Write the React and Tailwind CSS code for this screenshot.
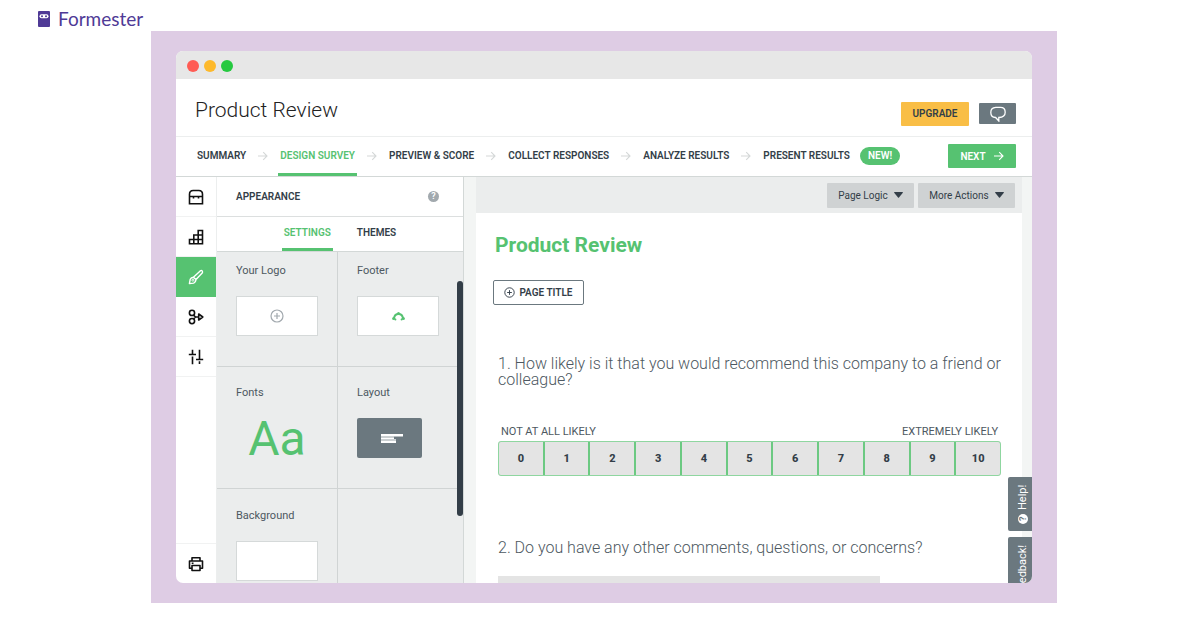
import React from "react";

function Icon({ size = "size-4", box = "0 0 16 16", children, className = "" }) {
  return (
    <svg viewBox={box} className={`${size} ${className}`} fill="none" stroke="currentColor" strokeWidth="1.5" aria-hidden="true">
      {children}
    </svg>
  );
}

const Arrow = ({ className = "" }) => (
  <Icon size="size-[10px]" box="0 0 10 10" className={`shrink-0 ${className}`}>
    <path d="M0 5h9M5.2 1.2 9 5 5.2 8.8" strokeWidth="1.1" />
  </Icon>
);

const PlusCircle = ({ size }) => (
  <Icon size={size} box="0 0 14 14">
    <circle cx="7" cy="7" r="6" strokeWidth="1.2" />
    <path d="M7 4v6M4 7h6" strokeWidth="1.2" />
  </Icon>
);

const Caret = () => (
  <svg viewBox="0 0 9 6" className="h-[6px] w-[9px]" aria-hidden="true">
    <path d="M.6 0h7.8q.8 0 .4.7L5 5.5q-.5.5-1 0L.2.7Q-.2 0 .6 0Z" fill="#333e48" />
  </svg>
);

const ChestIcon = () => (
  <Icon>
    <path d="M1.5 14.7V5.200q0-3.700 3.700-3.700h5.600q3.700 0 3.700 3.700v9.500zM1.500 7.500h13M5.500 7.500v2M10.500 7.500v2" strokeWidth="1.600" />
  </Icon>
);
const BlocksIcon = () => (
  <Icon>
    <path d="M1.500 10.500h13v4.200h-13zM5.800 14.500V6h8.700M10.200 14.500v-13h4.300v13" strokeWidth="1.600" />
  </Icon>
);
const BrushIcon = () => (
  <Icon>
    <path d="M5.400 8.300 12.200 1.900q1.200-.9 2 0t0 2.200L8 10.600M5.400 8.300q-2.300.2-3.200 2l-.8 4.300 4.300-.5q2.100-1 2.300-3.500z" strokeWidth="1.400" strokeLinejoin="round" />
    <circle cx="4.900" cy="11.200" r="1" strokeWidth=".9" />
  </Icon>
);
const LogicIcon = () => (
  <Icon>
    <circle cx="4" cy="3.900" r="2.600" strokeWidth="1.600" />
    <circle cx="4" cy="12.100" r="2.600" strokeWidth="1.600" />
    <path d="M5.600 6.200 7.500 8h3.500M5.600 9.800 7.500 8M10.700 5 14.800 8l-4.100 3z" strokeWidth="1.600" strokeLinejoin="round" />
  </Icon>
);
const SlidersIcon = () => (
  <Icon>
    <path d="M4.500 .8v4.700M4.500 7.500v7.700M.8 5.500h7.200M11.500 .8v9.700M11.500 12.200v2.800M8 10.500h7.200" strokeWidth="1.600" />
  </Icon>
);
const PrinterIcon = () => (
  <Icon>
    <path d="M4 5V1.700h8V5M4 12.300H1.500V5h13v7.300H12M4 9.500h8v5H4zM3.700 7.300h1.800" strokeWidth="1.600" strokeLinejoin="round" />
  </Icon>
);

const steps = ["SUMMARY", "DESIGN SURVEY", "PREVIEW & SCORE", "COLLECT RESPONSES", "ANALYZE RESULTS", "PRESENT RESULTS"];

const tools = [
  { name: "Question bank", icon: ChestIcon },
  { name: "Builder", icon: BlocksIcon },
  { name: "Appearance", icon: BrushIcon, active: true },
  { name: "Logic", icon: LogicIcon },
  { name: "Options", icon: SlidersIcon },
];

function Brand() {
  return (
    <header className="flex h-[31px] shrink-0 items-center pt-[6px] pl-[38px]">
      <a href="#" className="flex items-center gap-2 text-[#4f3a96]">
        <svg viewBox="0 0 12 16" className="h-4 w-3" aria-hidden="true">
          <rect width="12" height="16" rx="1" fill="#4f3a96" />
          <rect x="1.500" y="3.300" width="9" height="4" rx="2" fill="#fff" />
          <circle cx="4" cy="5.300" r="1" fill="#4f3a96" />
          <circle cx="8" cy="5.300" r="1" fill="#4f3a96" />
        </svg>
        <span className="font-['Lato',sans-serif] text-[19px] leading-5">Formester</span>
      </a>
    </header>
  );
}

function Steps() {
  return (
    <nav className="flex h-10 shrink-0 items-stretch justify-between border-b border-[#d3d8d7] pr-4 pl-[21px]">
      <div className="flex w-[653px] items-stretch justify-between">
        {steps.map((step, i) => (
          <React.Fragment key={step}>
            {i > 0 && <Arrow className="mt-[14px] text-[#d5d8d8]" />}
            <a
              href="#"
              className={
                i === 1
                  ? "-mx-[2px] border-b-3 border-[#56c271] px-[2px] pt-3 leading-[14px] whitespace-nowrap text-[#56c271]"
                  : "pt-3 leading-[14px] whitespace-nowrap"
              }
            >
              {step}
            </a>
          </React.Fragment>
        ))}
      </div>
      <span className="mt-[10px] mr-auto ml-[10px] h-[18px] rounded-full bg-[#56c271] px-2 leading-[18px] text-white">NEW!</span>
      <button className="mt-[7px] flex h-6 w-[68px] items-center justify-center gap-2 rounded-[1px] bg-[#56c271] text-white">
        NEXT <Arrow />
      </button>
    </nav>
  );
}

function Toolbar() {
  return (
    <aside className="flex w-[41px] shrink-0 flex-col border-r border-[#eceeee] text-[#111]">
      {tools.map(({ name, icon: Glyph, active }) => (
        <button
          key={name}
          aria-label={name}
          className={
            active
              ? "flex h-10 items-center justify-center bg-[#56c271] text-white"
              : "flex h-10 items-center justify-center border-b border-[#f1f2f2]"
          }
        >
          <Glyph />
        </button>
      ))}
      <button aria-label="Print" className="mt-auto flex h-10 items-center justify-center border-t border-[#f1f2f2]">
        <PrinterIcon />
      </button>
    </aside>
  );
}

function Appearance() {
  const label = "text-[11px] leading-4 text-[#4d5861]";
  return (
    <section className="flex w-[247px] shrink-0 flex-col border-r border-[#d3d8d7]">
      <div className="flex h-10 shrink-0 items-center justify-between border-b border-[#dcdfdf] pr-6 pl-[19px]">
        <h2 className="font-semibold">APPEARANCE</h2>
        <button aria-label="Help" className="size-[11px] rounded-full bg-[#a2a9ae] text-center text-[9px] leading-[11px] text-white">
          ?
        </button>
      </div>
      <div className="flex h-[35px] shrink-0 justify-center gap-[22px] border-b border-[#d3d8d7]">
        <button className="border-b-3 border-[#56c271] px-[2px] text-[#56c271]">SETTINGS</button>
        <button className="border-b-3 border-transparent px-[2px]">THEMES</button>
      </div>
      <div className="relative min-h-0 flex-1 overflow-hidden bg-[#ebeded]">
        <div className="grid grid-cols-[121px_1fr] font-normal">
          <div className="h-[115px] border-r border-b border-[#d0d4d4] pt-[11px] pl-[19px]">
            <div className={label}>Your Logo</div>
            <button aria-label="Add logo" className="mt-[17px] flex h-10 w-[82px] items-center justify-center border border-[#d5d9d9] bg-white text-[#a2a9ae]">
              <PlusCircle size="size-[14px]" />
            </button>
          </div>
          <div className="h-[115px] border-b border-[#d0d4d4] pt-[11px] pl-[19px]">
            <div className={label}>Footer</div>
            <button aria-label="Footer" className="mt-[17px] flex h-10 w-[82px] items-center justify-center border border-[#d5d9d9] bg-white">
              <svg viewBox="0 0 13 9" className="h-[9px] w-[13px]" fill="#56c271" aria-hidden="true">
                <path d="M2 6.500Q2.500 2 6.500 2T11 6.500" fill="none" stroke="#56c271" strokeWidth="2" />
                <circle cx="1.700" cy="6.500" r="1.600" />
                <circle cx="11.300" cy="6.500" r="1.600" />
                <circle cx="6.500" cy="1.600" r="1.500" />
                <circle cx="3.400" cy="7.500" r="1" />
                <circle cx="9.600" cy="7.500" r="1" />
              </svg>
            </button>
          </div>
          <div className="h-[122px] border-r border-b border-[#d0d4d4] pt-[18px] pl-[19px]">
            <div className={label}>Fonts</div>
            <button aria-label="Fonts" className="mt-[6px] flex h-16 w-[82px] items-center justify-center text-[48px] leading-none text-[#56c271]">
              Aa
            </button>
          </div>
          <div className="h-[122px] border-b border-[#d0d4d4] pt-[18px] pl-[19px]">
            <div className={label}>Layout</div>
            <button aria-label="Layout" className="mt-[17px] flex h-10 w-[65px] items-center justify-center rounded-[2px] bg-[#6b787f] pl-1">
              <svg viewBox="0 0 22 9" className="h-[9px] w-[22px]" aria-hidden="true">
                <path d="M0 0h22v2.500H13V5h2v4H0Z" fill="#fff" />
                <path d="M0 3h13M0 6h15" stroke="#6b787f" strokeWidth=".7" />
              </svg>
            </button>
          </div>
          <div className="h-[122px] border-r border-[#d0d4d4] pt-[19px] pl-[19px]">
            <div className={label}>Background</div>
            <button aria-label="Background" className="mt-[17px] block h-10 w-[82px] border border-[#d5d9d9] bg-white" />
          </div>
          <div />
        </div>
        <div className="absolute top-[29px] right-0 h-[235px] w-[6px] rounded-full bg-[#333e48]" />
      </div>
    </section>
  );
}

function Survey() {
  return (
    <main className="flex min-w-0 flex-1 flex-col bg-[#f3f5f4] pr-[10px] pl-3">
      <div className="flex h-9 shrink-0 items-center justify-end gap-1 bg-[#ebeded] pr-[7px] font-normal">
        <button className="flex h-[25px] w-[87px] items-center justify-center gap-[6px] rounded-[1px] bg-[#cfd2d3]">
          Page Logic <Caret />
        </button>
        <button className="flex h-[25px] w-[97px] items-center justify-center gap-[6px] rounded-[1px] bg-[#cfd2d3]">
          More Actions <Caret />
        </button>
      </div>
      <div className="min-h-0 flex-1 overflow-hidden bg-white pr-[21px] pl-[22px] font-normal">
        <h2 className="-ml-[3px] mt-5 text-[21px] leading-6 font-bold text-[#56c271]">Product Review</h2>
        <button className="-ml-[5px] mt-[23px] flex h-[25px] w-[91px] items-center justify-center gap-1 rounded-[2px] border border-[#6b787f] font-semibold">
          <PlusCircle size="size-[11px]" />
          PAGE TITLE
        </button>
        <p className="mt-[51px] text-[16px] leading-4 font-light text-[#4d5861]">
          1. How likely is it that you would recommend this company to a friend or colleague?
        </p>
        <div className="mt-[35px] flex justify-between px-[3px] text-[11px] leading-[18px] text-[#4d5861]">
          <span>NOT AT ALL LIKELY</span>
          <span>EXTREMELY LIKELY</span>
        </div>
        <fieldset className="flex h-[35px] divide-x-2 divide-[#6cc982] overflow-hidden rounded-[3px] border border-[#8fd6a0] bg-[#e4e4e4]">
          {[0, 1, 2, 3, 4, 5, 6, 7, 8, 9, 10].map((n) => (
            <label key={n} className="relative flex flex-1 items-center justify-center pt-[2px] text-[11px] font-extrabold">
              <input type="radio" name="likelihood" value={n} className="sr-only" />
              {n}
            </label>
          ))}
        </fieldset>
        <label htmlFor="comments" className="mt-16 block text-[16px] leading-4 font-light text-[#4d5861]">
          2. Do you have any other comments, questions, or concerns?
        </label>
        <textarea id="comments" className="mt-5 block h-20 w-[382px] resize-none bg-[#e4e4e4]" />
      </div>
    </main>
  );
}

function SideTabs() {
  const tab = "flex w-6 rotate-180 items-center rounded-r-[2px] bg-[#6b787f] pr-[6px] text-[11px] leading-[18px] font-normal text-white [writing-mode:vertical-rl]";
  return (
    <div className="absolute top-[300px] right-0 flex flex-col gap-[6px]">
      <button className={`${tab} h-[54px] justify-center gap-1`}>
        <span className="flex size-[10px] items-center justify-center rounded-full bg-white text-[9px] leading-none font-bold text-[#6b787f]">?</span>
        Help!
      </button>
      <button className={`${tab} h-[66px] justify-end pb-2`}>Feedback!</button>
    </div>
  );
}

export default function App() {
  return (
    <div className="flex h-screen flex-col bg-white pb-[27px]">
      <Brand />
      <div className="mr-[143px] ml-[151px] flex min-h-0 flex-1 flex-col bg-[#decce4] px-[25px] py-5 font-['Roboto',sans-serif] text-[10px] font-semibold text-[#333e48]">
        <div className="flex min-h-0 flex-1 flex-col overflow-hidden rounded-[7px] bg-white">
          <div className="flex h-7 shrink-0 items-center gap-[5px] bg-[#e7e7e7] pt-[2px] pl-[11px]">
            <span className="size-3 rounded-full bg-[#ff5c54]" />
            <span className="size-3 rounded-full bg-[#fdb92c]" />
            <span className="size-3 rounded-full bg-[#26c940]" />
          </div>
          <div className="flex h-[58px] shrink-0 items-center gap-[10px] border-b border-[#eceeee] pr-4 pl-[19px]">
            <h1 className="mr-auto pt-1 text-[21px] leading-6 font-light text-[#222]">Product Review</h1>
            <button className="mt-3 h-6 w-[68px] rounded-[1px] bg-[#f9be46]">UPGRADE</button>
            <button aria-label="Comments" className="mt-3 flex h-[21px] w-[37px] items-center justify-center rounded-[1px] bg-[#6b787f] text-white">
              <Icon>
                <path d="M8.800 11.500V15L5.600 11.500Q.8 11.200.8 6.400T5.800 1.300h4.600q4.800 0 4.800 5t-6.400 5.200Z" strokeWidth="1.300" />
              </Icon>
            </button>
          </div>
          <Steps />
          <div className="relative flex min-h-0 flex-1">
            <Toolbar />
            <Appearance />
            <Survey />
            <SideTabs />
          </div>
        </div>
      </div>
    </div>
  );
}
